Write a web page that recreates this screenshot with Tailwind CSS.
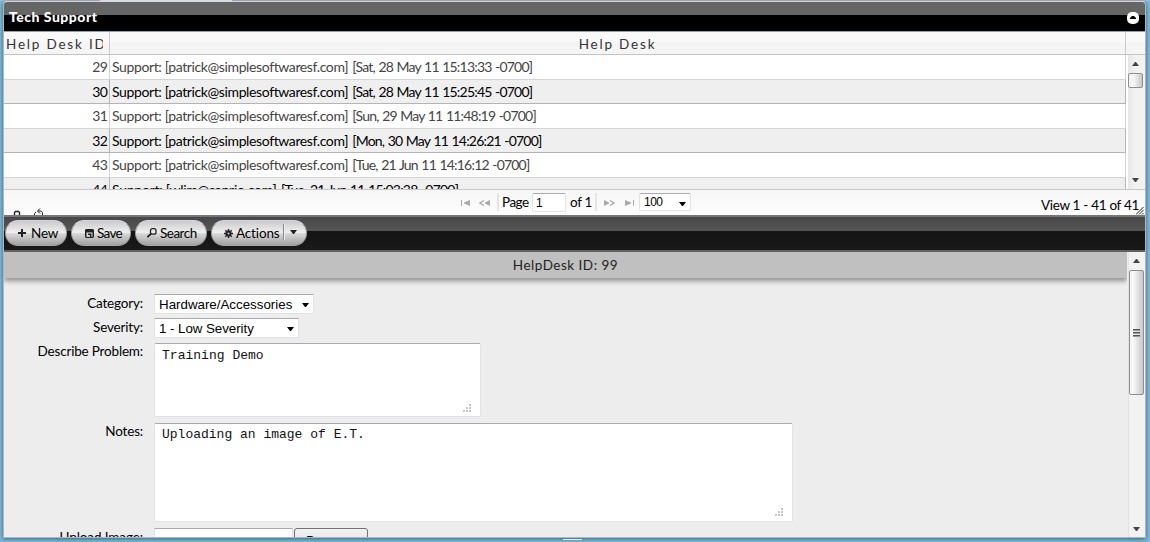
<!DOCTYPE html>
<html lang="en">
<head>
<meta charset="utf-8">
<title>Tech Support</title>
<script src="https://cdn.jsdelivr.net/npm/@tailwindcss/browser@4"></script>
</head>
<body class="w-[1150px] h-[542px] overflow-hidden bg-[#7bbbd7] font-[Lato,sans-serif] text-[14px] text-black whitespace-nowrap">
<div class="w-[1150px] h-[542px] flex flex-col pl-[3px]">
  <div class="-ml-[3px] h-px w-[1150px] bg-[#b4bac9] pl-[100px]"><div class="h-px w-[132px] bg-white"></div></div>
  <div class="flex w-[1143px] h-[537px] flex-col rounded-t-[4px] border border-[#b0b4c2] border-t-[#d5d7dc] bg-[#ededed] shadow-[0_1px_4px_rgba(30,60,80,0.7)]">
    <!-- title bar -->
    <div class="flex h-[29px] shrink-0 items-center justify-between rounded-t-[3px] bg-linear-to-b from-[#666] from-[13px] to-black to-[13px] pl-[5px] pr-[6px]">
      <span class="text-[14px] font-black leading-[27px] text-white tracking-[0.5px]">Tech Support</span>
      <svg class="mt-[2px] size-3" viewBox="0 0 12 12"><rect width="12" height="12" rx="5" fill="#fff"/><path d="M3 7h6V6L7 4H5L3 6z" fill="#000"/></svg>
    </div>
    <!-- grid header -->
    <div class="flex h-6 shrink-0 border-t border-b border-t-[#8aa5b4] border-b-[#c4c4c4] bg-[linear-gradient(#f9f9f9_50%,#f5f5f5_50%)] text-[#333] leading-[25px]">
      <div class="w-[106px] border-r border-[#cacaca] pl-[2px]"><div class="w-[97px] overflow-hidden text-[13.5px] tracking-[1.8px]">Help Desk ID</div></div>
      <div class="w-[1016px] border-r border-[#cacaca] text-center text-[13.5px] tracking-[1.8px]">Help Desk</div>
    </div>
    <!-- grid body -->
    <div class="flex h-[134px] shrink-0 overflow-hidden bg-white">
      <div class="w-[1122px] shrink-0 text-[#444] leading-[23px] tracking-[-0.38px]">
        <div class="flex h-[25px] border-b border-[#d4d4d4]"><div class="w-[106px] border-r border-[#d4d4d4] pr-[2px] text-right tracking-[-0.8px]">29</div><div class="w-[1016px] border-r border-[#d4d4d4] pl-[2px]">Support: [patrick@simplesoftwaresf.com] <span class="tracking-[-0.8px] word-spacing ml-px [word-spacing:0.7px]">[Sat, 28 May 11 15:13:33 -0700]</span></div></div>
        <div class="flex h-6 border-b border-[#b4b4b4] bg-[#efefef] text-black"><div class="w-[106px] border-r border-[#b4b4b4] pr-[2px] text-right tracking-[-0.8px]">30</div><div class="w-[1016px] border-r border-[#b4b4b4] pl-[2px]">Support: [patrick@simplesoftwaresf.com] <span class="tracking-[-0.8px] ml-px [word-spacing:0.7px]">[Sat, 28 May 11 15:25:45 -0700]</span></div></div>
        <div class="flex h-[25px] border-b border-[#d4d4d4]"><div class="w-[106px] border-r border-[#d4d4d4] pr-[2px] text-right tracking-[-0.8px]">31</div><div class="w-[1016px] border-r border-[#d4d4d4] pl-[2px]">Support: [patrick@simplesoftwaresf.com] <span class="tracking-[-0.8px] ml-px [word-spacing:0.7px]">[Sun, 29 May 11 11:48:19 -0700]</span></div></div>
        <div class="flex h-6 border-b border-[#b4b4b4] bg-[#efefef] text-black"><div class="w-[106px] border-r border-[#b4b4b4] pr-[2px] text-right tracking-[-0.8px]">32</div><div class="w-[1016px] border-r border-[#b4b4b4] pl-[2px]">Support: [patrick@simplesoftwaresf.com] <span class="tracking-[-0.8px] ml-px [word-spacing:0.7px]">[Mon, 30 May 11 14:26:21 -0700]</span></div></div>
        <div class="flex h-[25px] border-b border-[#d4d4d4]"><div class="w-[106px] border-r border-[#d4d4d4] pr-[2px] text-right tracking-[-0.8px]">43</div><div class="w-[1016px] border-r border-[#d4d4d4] pl-[2px]">Support: [patrick@simplesoftwaresf.com] <span class="tracking-[-0.8px] ml-px [word-spacing:0.7px]">[Tue, 21 Jun 11 14:16:12 -0700]</span></div></div>
        <div class="flex h-6 border-b border-[#b4b4b4] bg-[#efefef] text-black"><div class="w-[106px] border-r border-[#b4b4b4] pr-[2px] text-right tracking-[-0.8px]">44</div><div class="w-[1016px] border-r border-[#b4b4b4] pl-[2px] tracking-[-0.26px]">Support: [wlim@saprio.com] <span class="tracking-[-0.8px] ml-px [word-spacing:0.7px]">[Tue, 21 Jun 11 15:03:38 -0700]</span></div></div>
      </div>
      <div class="ml-[1px] flex w-[18px] flex-col items-center border-l border-white bg-linear-to-r from-[#e6e6e6] to-[#f2f2f2] to-40% pr-[2px]">
        <svg class="mt-[7px] h-1 w-[7px] shrink-0" viewBox="0 0 7 4"><path d="M3 0h1l3 4H0z" fill="#444"/></svg>
        <div class="mt-[7px] h-[15px] w-[15px] shrink-0 rounded-[2px] border border-[#8e8e8e] bg-linear-to-r from-[#f4f4f4] from-40% to-[#c8c8cc]"></div>
        <svg class="mt-[90px] h-1 w-[7px] shrink-0" viewBox="0 0 7 4"><path d="M0 0h7L4 4H3z" fill="#444"/></svg>
      </div>
    </div>
    <!-- pager -->
    <div class="relative flex h-[26px] shrink-0 items-start border-t border-[#c8c8c8] bg-linear-to-b from-[#f7f7f7] to-[#fcfcfc] pl-[457px]">
      <svg class="mt-[10px] h-[6px] w-[9px]" viewBox="0 0 9 6"><path d="M0 0h1v6H0zM9 0v6L3 3.5v-1z" fill="#aaa"/></svg>
      <svg class="ml-[9px] mt-[10px] h-[6px] w-[11px]" viewBox="0 0 11 6"><path d="M11 0v6L6 3.5v-1z" fill="#aaa"/><path d="M5 .5L1 3l4 2.500" fill="none" stroke="#aaa" stroke-width="1.300"/></svg>
      <div class="ml-[7px] mt-[3px] h-[18px] w-[2px] bg-[#e4e4e4]"></div>
      <span class="ml-[3px] w-[30px] leading-[25px] text-[13.500px] tracking-[-0.500px]">Page</span>
      <div class="mt-[3px] h-[19px] w-[34px] rounded-[2px] border border-[#dfe2ea] border-t-[#aaa] bg-white pl-[3px] font-['Liberation_Sans',sans-serif] text-[12px] leading-[18px]">1</div>
      <span class="ml-[4px] w-[22px] leading-[25px] text-[13.5px] tracking-[-0.3px]">of 1</span>
      <div class="ml-[3px] mt-[3px] h-[18px] w-[2px] bg-[#e4e4e4]"></div>
      <svg class="ml-[7px] mt-[10px] h-[6px] w-[11px]" viewBox="0 0 11 6"><path d="M0 0v6l5-2.500v-1z" fill="#aaa"/><path d="M6 .5L10 3 6 5.500" fill="none" stroke="#aaa" stroke-width="1.300"/></svg>
      <svg class="ml-[10px] mt-[10px] h-[6px] w-[9px]" viewBox="0 0 9 6"><path d="M8 0h1v6H8zM0 0v6l6-2.500v-1z" fill="#aaa"/></svg>
      <div class="ml-[5px] mt-[3px] flex h-[18px] w-[52px] items-center justify-between rounded-[2px] border border-[#dfe2ea] border-t-[#aaa] bg-white pl-1 pr-[4px] font-['Liberation_Sans',sans-serif] text-[12px] leading-[17px] tracking-[-0.5px]"><span class="pt-px">100</span><svg class="mt-[3px] h-1 w-[7px]" viewBox="0 0 7 4"><path d="M0 0h7L4 4H3z"/></svg></div>
      <span class="ml-auto mr-[6px] mt-[3px] leading-[25px] text-[13.5px] tracking-[-0.3px]">View 1 - 41 of 41</span>
      <svg class="absolute right-[1px] top-[17px] h-[8px] w-[8px]" viewBox="0 0 8 8"><path d="M0 7.500L7.500 0M3 7.500L7.500 3M6 7.500L7.500 6" stroke="#222" fill="none"/></svg>
      <svg class="absolute left-[9px] top-[20px] h-[5px] w-[8px]" viewBox="0 0 8 5"><path d="M1.500 5V2.500l1-1h3l1 1V5" fill="none" stroke="#222" stroke-width="1.400"/></svg>
      <svg class="absolute left-[29px] top-[18px] h-[7px] w-[12px]" viewBox="0 0 12 7"><path d="M1.500 7V5.500L3 4M7 .5L4.500 3 7 5.500M5 3h3l1.500 1.500V7" fill="none" stroke="#222"/></svg>
    </div>
    <!-- toolbar -->
    <div class="flex h-[37px] shrink-0 items-start gap-1 border-t-2 border-b-2 border-t-[#777] border-b-[#606060] bg-[linear-gradient(#484848_0,#555_14px,#141414_14px,#191919)] pl-px pt-[3px] text-[13.500px] leading-[25px]">
      <div class="flex h-[26px] w-[62px] items-center rounded-full border border-[#a5a5a5] border-t-[#d8d4e0] bg-[linear-gradient(#cbcbcd,#efefef_48%,#d9d9d9_52%,#a0a0a0)] pl-[12px]"><svg class="mr-[5px] size-2" viewBox="0 0 8 8"><path d="M3 0h2v3h3v2H5v3H3V5H0V3h3z" fill="#222"/></svg><span class="tracking-[-0.2px]">New</span></div>
      <div class="flex h-[26px] w-[60px] items-center rounded-full border border-[#a5a5a5] border-t-[#d8d4e0] bg-[linear-gradient(#cbcbcd,#efefef_48%,#d9d9d9_52%,#a0a0a0)] pl-[13px]"><svg class="mr-[3px] size-[9px]" viewBox="0 0 9 9"><path d="M1 0h7l1 1v7L8 9H1L0 8V1zM1.500 3v5h6V3z" fill="#222" fill-rule="evenodd"/><path d="M1 2h7v1.500H1zM3 4.500h3.500V8H5V6H3z" fill="#222"/></svg><span class="tracking-[-0.7px]">Save</span></div>
      <div class="flex h-[26px] w-[72px] items-center rounded-full border border-[#a5a5a5] border-t-[#d8d4e0] bg-[linear-gradient(#cbcbcd,#efefef_48%,#d9d9d9_52%,#a0a0a0)] pl-[11px]"><svg class="mr-[3px] size-[10px]" viewBox="0 0 10 10"><rect x="3.500" y=".7" width="5.500" height="5.500" rx="2" fill="none" stroke="#222" stroke-width="1.300"/><path d="M3.800 6L.5 9" stroke="#222" stroke-width="1.800"/></svg><span class="tracking-[-0.5px]">Search</span></div>
      <div class="flex h-[26px] w-[96px] items-center rounded-full border border-[#a5a5a5] border-t-[#d8d4e0] bg-[linear-gradient(#cbcbcd,#efefef_48%,#d9d9d9_52%,#a0a0a0)] pl-[12px]"><svg class="mr-[3px] size-[9px]" viewBox="0 0 9 9"><path d="M4.500 0v9M0 4.500h9M1.300 1.300l6.400 6.400M7.700 1.300L1.300 7.700" stroke="#222" stroke-width="1.500"/><circle cx="4.500" cy="4.500" r="2.200" fill="none" stroke="#222" stroke-width="1.600"/><circle cx="4.500" cy="4.500" r="1" fill="#ccc"/></svg><span class="w-[43px] tracking-[-0.15px]">Actions</span><span class="ml-[4px] mb-[2px] h-[16px] w-[2px] border-l border-[#888] bg-[#eee]"></span><svg class="ml-[5px] mb-[3px] h-[4px] w-[7px]" viewBox="0 0 7 4"><path d="M0 0h7L4 4H3z" fill="#222"/></svg></div>
    </div>
    <!-- form -->
    <div class="flex h-[285px] shrink-0 overflow-hidden">
      <div class="flex w-[1123px] shrink-0 flex-col overflow-hidden">
        <div class="h-[26px] shrink-0 bg-[#c0c0c0] text-center text-[13.5px] leading-[27px] text-[#222] tracking-[0.5px] shadow-[0_3px_5px_rgba(0,0,0,0.4)]">HelpDesk ID: 99</div>
        <div class="grid grid-cols-[139px_1fr] gap-x-[11px] pt-4 text-[13.5px] leading-5 tracking-[-0.18px]">
          <div class="-mt-px text-right">Category:</div>
          <div class="flex h-6"><div class="flex h-5 w-[160px] items-center justify-between border border-[#dfe2ea] border-t-[#aaa] bg-white pl-[4px] pr-[4px] font-['Liberation_Sans',sans-serif] text-[13.333px] tracking-normal"><span class="pt-[2px]">Hardware/Accessories</span><svg class="mt-px h-1 w-[7px]" viewBox="0 0 7 4"><path d="M0 0h7L4 4H3z"/></svg></div></div>
          <div class="-mt-px text-right">Severity:</div>
          <div class="flex h-[25px]"><div class="flex h-5 w-[145px] items-center justify-between border border-[#dfe2ea] border-t-[#aaa] bg-white pl-[4px] pr-[4px] font-['Liberation_Sans',sans-serif] text-[13.333px] tracking-[-0.05px]"><span class="pt-[2px]">1 - Low Severity</span><svg class="mt-px h-1 w-[7px]" viewBox="0 0 7 4"><path d="M0 0h7L4 4H3z"/></svg></div></div>
          <div class="-mt-[2px] text-right">Describe Problem:</div>
          <div class="h-20"><div class="flex h-[74px] w-[327px] justify-between rounded-[2px] border border-[#dfe2ea] border-t-[#aaa] bg-white pl-[7px] pr-[9px] pt-[3px] font-['Liberation_Mono',monospace] text-[13px] leading-[18px] text-[#111] tracking-[0.02px]">Training Demo<svg class="mb-[4px] mt-auto size-2" viewBox="0 0 8 8"><path d="M6 0h2v2H6zM3 3h2v2H3zM6 3h2v2H6zM0 6h2v2H0zM3 6h2v2H3zM6 6h2v2H6z" fill="#c4c4c4"/></svg></div></div>
          <div class="-mt-[2px] text-right">Notes:</div>
          <div class="h-[105px]"><div class="flex h-[99px] w-[639px] justify-between rounded-[2px] border border-[#dfe2ea] border-t-[#aaa] bg-white pl-[7px] pr-[9px] pt-[2px] font-['Liberation_Mono',monospace] text-[13px] leading-[18px] text-[#111] tracking-normal">Uploading an image of E.T.<svg class="mb-[5px] mt-auto size-2" viewBox="0 0 8 8"><path d="M6 0h2v2H6zM3 3h2v2H3zM6 3h2v2H6zM0 6h2v2H0zM3 6h2v2H3zM6 6h2v2H6z" fill="#c4c4c4"/></svg></div></div>
          <div class="-mt-px text-right tracking-[-0.1px]">Upload Image:</div>
          <div class="flex gap-px"><div class="h-[22px] w-[139px] border border-[#dfe2ea] border-t-[#aaa] bg-white"></div><div class="h-[23px] w-[74px] rounded-[3px] border border-[#707070] bg-linear-to-b from-[#f2f2f2] to-[#ddd] pl-[11px] pt-[2px] font-['Liberation_Sans',sans-serif] text-[13.333px]">Browse...</div></div>
        </div>
      </div>
      <div class="ml-px flex w-[17px] flex-col items-center border-l border-[#e2e2e2] bg-[#f2f2f2] pr-px">
        <svg class="mt-[7px] h-1 w-[7px] shrink-0" viewBox="0 0 7 4"><path d="M3 0h1l3 4H0z" fill="#444"/></svg>
        <div class="mt-[7px] flex h-[125px] w-[15px] shrink-0 flex-col items-center justify-center gap-px rounded-[2px] border border-[#8e8e8e] bg-linear-to-r from-[#f6f6f6] from-30% to-[#c8c8cc]"><i class="h-[2px] w-[7px] border-t border-[#555] bg-[#999]"></i><i class="h-[2px] w-[7px] border-t border-[#555] bg-[#999]"></i><i class="h-[2px] w-[7px] border-t border-[#555] bg-[#999]"></i></div>
        <svg class="mt-[132px] h-1 w-[7px] shrink-0" viewBox="0 0 7 4"><path d="M0 0h7L4 4H3z" fill="#444"/></svg>
      </div>
    </div>
  </div>
  <div class="ml-[560px] mt-px h-px w-[19px] bg-[#dcecf4]"></div>
</div>
</body>
</html>
